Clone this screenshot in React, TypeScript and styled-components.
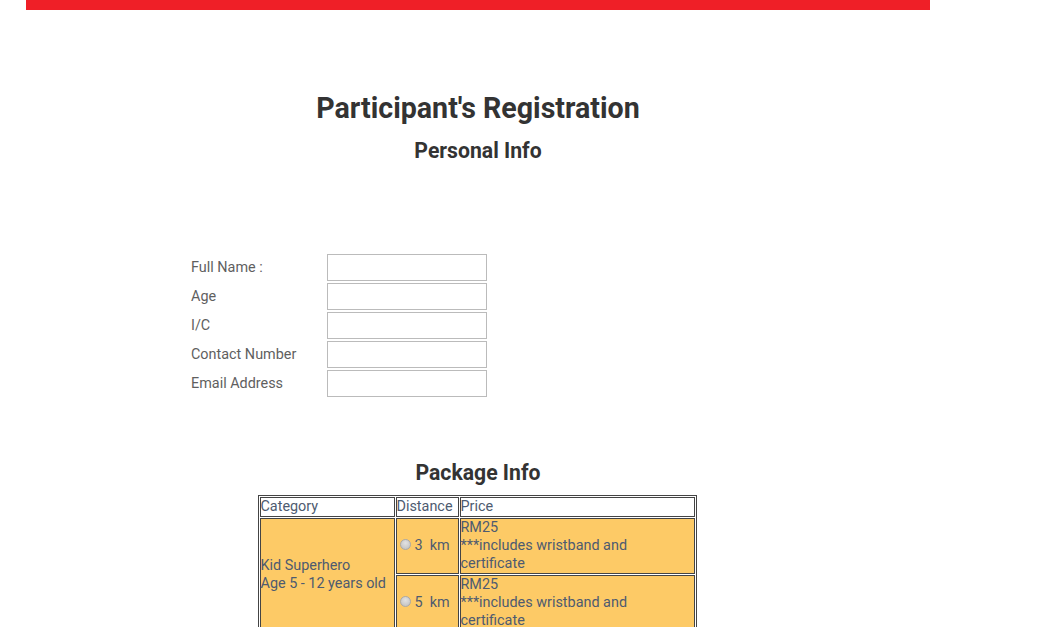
import React from "react";
import styled, { createGlobalStyle } from "styled-components";

const GlobalStyle = createGlobalStyle`
  html, body { margin: 0; padding: 0; background: #fff; }
  body { font-family: Roboto, "Liberation Sans", sans-serif; color: #333; }
`;

const Page = styled.div`
  width: 904px;
  margin-left: 26px;
`;

const TopBar = styled.div`
  height: 10px;
  background: #ef1f27;
`;

const Title = styled.h1`
  margin: 81px 0 0;
  font-size: 28.6px;
  line-height: 34px;
  font-weight: 700;
  text-align: center;
  color: #333;
`;

const SubTitle = styled.h2<{ $top: number }>`
  margin: ${(p) => p.$top}px 0 0;
  font-size: 21.2px;
  line-height: 24px;
  font-weight: 700;
  text-align: center;
  color: #333;
`;

const Form = styled.div`
  margin: 91px 0 0 165px;
  display: grid;
  grid-template-columns: 136px 160px;
  row-gap: 2px;
  align-items: center;
`;

const Label = styled.label`
  font-size: 14.4px;
  color: #5f5f5f;
`;

const Input = styled.input`
  box-sizing: border-box;
  width: 160px;
  height: 27px;
  border: 1px solid #bbb;
  background: #fff;
  margin: 0;
  padding: 0 4px;
  outline: none;
`;

const TableWrap = styled.div`
  display: flex;
  justify-content: center;
  margin-top: 10px;
  padding-right: 2px;
`;

const Table = styled.table`
  table-layout: fixed;
  width: 439px;
  border: 1px solid #444;
  border-spacing: 1px;
  border-collapse: separate;
  font-size: 14.4px;
  line-height: 18px;
  color: #4e5b70;
`;

const Cell = styled.td<{ $head?: boolean }>`
  box-sizing: border-box;
  border: 1px solid #444;
  padding: 0;
  background: ${(p) => (p.$head ? "#fff" : "#fdca66")};
  vertical-align: middle;
  text-align: left;
`;

const Radio = styled.span`
  display: inline-block;
  width: 11px;
  height: 11px;
  border-radius: 50%;
  background: radial-gradient(circle at 50% 35%, #e2e2e2, #bdbdbd);
  border: 1px solid #a9a9a9;
  box-sizing: border-box;
  margin: 0 4px 0 3px;
  vertical-align: 0px;
`;

const Dist = styled.span`
  white-space: pre;
`;

const fields = ["Full Name :", "Age", "I/C", "Contact Number", "Email Address"];

export default function App() {
  return (
    <>
      <GlobalStyle />
      <Page>
        <TopBar />
        <Title>Participant's Registration</Title>
        <SubTitle $top={14}>Personal Info</SubTitle>
        <Form>
          {fields.map((f) => (
            <React.Fragment key={f}>
              <Label>{f}</Label>
              <Input type="text" />
            </React.Fragment>
          ))}
        </Form>
        <SubTitle $top={64}>Package Info</SubTitle>
        <TableWrap>
          <Table>
            <colgroup>
              <col style={{ width: 135 }} />
              <col style={{ width: 63 }} />
              <col />
            </colgroup>
            <tbody>
              <tr>
                <Cell $head>Category</Cell>
                <Cell $head>Distance</Cell>
                <Cell $head>Price</Cell>
              </tr>
              <tr>
                <Cell rowSpan={2}>
                  Kid Superhero
                  <br />
                  Age 5 - 12 years old
                </Cell>
                <Cell>
                  <Radio />
                  <Dist>3  km</Dist>
                </Cell>
                <Cell>
                  RM25
                  <br />
                  ***includes wristband and certificate
                </Cell>
              </tr>
              <tr>
                <Cell>
                  <Radio />
                  <Dist>5  km</Dist>
                </Cell>
                <Cell>
                  RM25
                  <br />
                  ***includes wristband and certificate
                </Cell>
              </tr>
            </tbody>
          </Table>
        </TableWrap>
      </Page>
    </>
  );
}
